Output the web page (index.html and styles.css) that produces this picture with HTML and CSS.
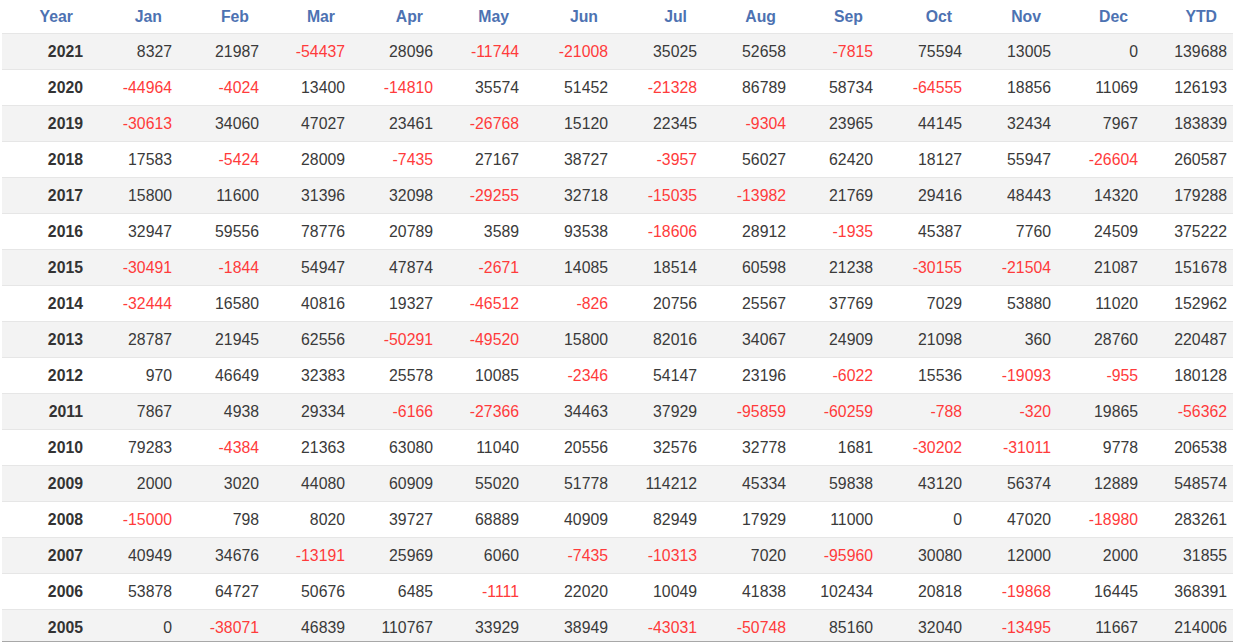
FILE: index.html
```html
<!DOCTYPE html>
<html>
<head>
<meta charset="utf-8">
<link rel="stylesheet" href="styles.css">
</head>
<body>
<div class="wrap">
<table class="returns">
<colgroup>
<col class="w87"><col class="w89"><col class="w87"><col class="w86"><col class="w88"><col class="w86"><col class="w89"><col class="w89"><col class="w89"><col class="w87"><col class="w89"><col class="w89"><col class="w87"><col class="w89">
</colgroup>
<thead>
<tr><th>Year</th><th>Jan</th><th>Feb</th><th>Mar</th><th>Apr</th><th>May</th><th>Jun</th><th>Jul</th><th>Aug</th><th>Sep</th><th>Oct</th><th>Nov</th><th>Dec</th><th>YTD</th></tr>
</thead>
<tbody>
<tr><td class="yr">2021</td><td>8327</td><td>21987</td><td class="neg">-54437</td><td>28096</td><td class="neg">-11744</td><td class="neg">-21008</td><td>35025</td><td>52658</td><td class="neg">-7815</td><td>75594</td><td>13005</td><td>0</td><td>139688</td></tr>
<tr><td class="yr">2020</td><td class="neg">-44964</td><td class="neg">-4024</td><td>13400</td><td class="neg">-14810</td><td>35574</td><td>51452</td><td class="neg">-21328</td><td>86789</td><td>58734</td><td class="neg">-64555</td><td>18856</td><td>11069</td><td>126193</td></tr>
<tr><td class="yr">2019</td><td class="neg">-30613</td><td>34060</td><td>47027</td><td>23461</td><td class="neg">-26768</td><td>15120</td><td>22345</td><td class="neg">-9304</td><td>23965</td><td>44145</td><td>32434</td><td>7967</td><td>183839</td></tr>
<tr><td class="yr">2018</td><td>17583</td><td class="neg">-5424</td><td>28009</td><td class="neg">-7435</td><td>27167</td><td>38727</td><td class="neg">-3957</td><td>56027</td><td>62420</td><td>18127</td><td>55947</td><td class="neg">-26604</td><td>260587</td></tr>
<tr><td class="yr">2017</td><td>15800</td><td>11600</td><td>31396</td><td>32098</td><td class="neg">-29255</td><td>32718</td><td class="neg">-15035</td><td class="neg">-13982</td><td>21769</td><td>29416</td><td>48443</td><td>14320</td><td>179288</td></tr>
<tr><td class="yr">2016</td><td>32947</td><td>59556</td><td>78776</td><td>20789</td><td>3589</td><td>93538</td><td class="neg">-18606</td><td>28912</td><td class="neg">-1935</td><td>45387</td><td>7760</td><td>24509</td><td>375222</td></tr>
<tr><td class="yr">2015</td><td class="neg">-30491</td><td class="neg">-1844</td><td>54947</td><td>47874</td><td class="neg">-2671</td><td>14085</td><td>18514</td><td>60598</td><td>21238</td><td class="neg">-30155</td><td class="neg">-21504</td><td>21087</td><td>151678</td></tr>
<tr><td class="yr">2014</td><td class="neg">-32444</td><td>16580</td><td>40816</td><td>19327</td><td class="neg">-46512</td><td class="neg">-826</td><td>20756</td><td>25567</td><td>37769</td><td>7029</td><td>53880</td><td>11020</td><td>152962</td></tr>
<tr><td class="yr">2013</td><td>28787</td><td>21945</td><td>62556</td><td class="neg">-50291</td><td class="neg">-49520</td><td>15800</td><td>82016</td><td>34067</td><td>24909</td><td>21098</td><td>360</td><td>28760</td><td>220487</td></tr>
<tr><td class="yr">2012</td><td>970</td><td>46649</td><td>32383</td><td>25578</td><td>10085</td><td class="neg">-2346</td><td>54147</td><td>23196</td><td class="neg">-6022</td><td>15536</td><td class="neg">-19093</td><td class="neg">-955</td><td>180128</td></tr>
<tr><td class="yr">2011</td><td>7867</td><td>4938</td><td>29334</td><td class="neg">-6166</td><td class="neg">-27366</td><td>34463</td><td>37929</td><td class="neg">-95859</td><td class="neg">-60259</td><td class="neg">-788</td><td class="neg">-320</td><td>19865</td><td class="neg">-56362</td></tr>
<tr><td class="yr">2010</td><td>79283</td><td class="neg">-4384</td><td>21363</td><td>63080</td><td>11040</td><td>20556</td><td>32576</td><td>32778</td><td>1681</td><td class="neg">-30202</td><td class="neg">-31011</td><td>9778</td><td>206538</td></tr>
<tr><td class="yr">2009</td><td>2000</td><td>3020</td><td>44080</td><td>60909</td><td>55020</td><td>51778</td><td>114212</td><td>45334</td><td>59838</td><td>43120</td><td>56374</td><td>12889</td><td>548574</td></tr>
<tr><td class="yr">2008</td><td class="neg">-15000</td><td>798</td><td>8020</td><td>39727</td><td>68889</td><td>40909</td><td>82949</td><td>17929</td><td>11000</td><td>0</td><td>47020</td><td class="neg">-18980</td><td>283261</td></tr>
<tr><td class="yr">2007</td><td>40949</td><td>34676</td><td class="neg">-13191</td><td>25969</td><td>6060</td><td class="neg">-7435</td><td class="neg">-10313</td><td>7020</td><td class="neg">-95960</td><td>30080</td><td>12000</td><td>2000</td><td>31855</td></tr>
<tr><td class="yr">2006</td><td>53878</td><td>64727</td><td>50676</td><td>6485</td><td class="neg">-1111</td><td>22020</td><td>10049</td><td>41838</td><td>102434</td><td>20818</td><td class="neg">-19868</td><td>16445</td><td>368391</td></tr>
<tr><td class="yr">2005</td><td>0</td><td class="neg">-38071</td><td>46839</td><td>110767</td><td>33929</td><td>38949</td><td class="neg">-43031</td><td class="neg">-50748</td><td>85160</td><td>32040</td><td class="neg">-13495</td><td>11667</td><td>214006</td></tr>
</tbody>
</table>
</div>
</body>
</html>
```

FILE: styles.css
```css
html, body {
  margin: 0;
  padding: 0;
  background: #ffffff;
}

.wrap {
  margin-left: 2px;
  width: 1231px;
  height: 641px;
  overflow: hidden;
  border-bottom: 1px solid #a8a8a8;
}

.returns {
  width: 1231px;
  table-layout: fixed;
  border-collapse: collapse;
  border-spacing: 0;
  font-family: "Liberation Sans", Arial, sans-serif;
  font-size: 15.8px;
  color: #3a3a3a;
}

.w86 { width: 86px; }
.w87 { width: 87px; }
.w88 { width: 88px; }
.w89 { width: 89px; }

.returns th {
  height: 33px;
  padding: 1px 16px 0 0;
  text-align: right;
  vertical-align: middle;
  font-weight: bold;
  color: #4d72b2;
  box-sizing: border-box;
}

.returns td {
  height: 36px;
  padding: 2px 6px 0 0;
  text-align: right;
  vertical-align: middle;
  border-top: 1px solid #e6e6e6;
  box-sizing: border-box;
  white-space: nowrap;
}

.returns tbody tr:nth-child(odd) td {
  background: #f3f3f3;
}

.returns td.yr {
  font-weight: bold;
  color: #333333;
}

.returns td.neg {
  color: #ff3b3b;
}
```
